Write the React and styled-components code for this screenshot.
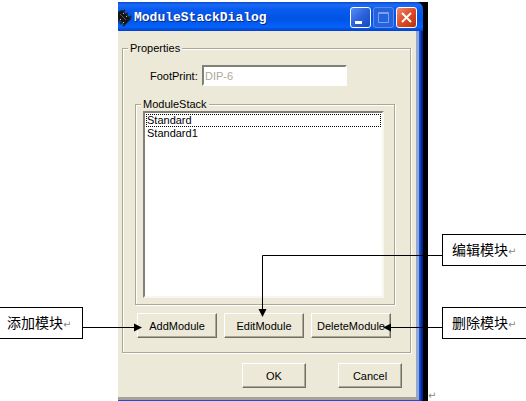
import React, { useState } from 'react';
import styled, { createGlobalStyle } from 'styled-components';

const GlobalStyle = createGlobalStyle`
    * {
        box-sizing: border-box;
    }
    body {
        margin: 0;
        background-color: white;
    }
`;

const Page = styled.main`
    display: grid;
    grid-template-columns: 118px minmax(0, 1fr) 98px;
    align-items: start;
    height: 100vh;
    padding-top: 2px;
    overflow: hidden;
    color: black;
    font-family: "Liberation Sans", "Noto Sans CJK SC", sans-serif;
    font-size: 11px;
    line-height: 14px;
`;

const LeftNotes = styled.div`
    padding: 305px 35px 0 0;
`;

const RightNotes = styled.div`
    display: flex;
    flex-direction: column;
    gap: 41px;
    padding-top: 232px;
`;

const Note = styled.div`
    position: relative;
    height: 32px;
    margin-left: ${(props) => (props.$side === 'right' ? '14px' : '0')};
    padding-left: ${(props) => (props.$side === 'right' ? '9px' : '7px')};
    border: 1px solid black;
    border-left-width: ${(props) => (props.$side === 'right' ? '1px' : '0')};
    border-right-width: ${(props) => (props.$side === 'right' ? '0' : '1px')};
    background-color: white;
    font-family: "Noto Sans CJK SC", sans-serif;
    font-size: 14px;
    line-height: 28px;
    white-space: nowrap;
`;

const ReturnMark = styled.span`
    color: #888;
    font-family: "DejaVu Sans", sans-serif;
    font-size: 10px;
    line-height: 10px;
`;

const LastMark = styled(ReturnMark)`
    margin-top: 11px;
`;

// the connectors lie over the dialog
const Connector = styled.svg`
    position: absolute;
    top: ${(props) => props.$top};
    left: ${(props) => (props.$side === 'right' ? 'auto' : '100%')};
    right: ${(props) => (props.$side === 'right' ? '100%' : 'auto')};
    z-index: 1;
    pointer-events: none;
`;

const Shadow = styled.div`
    padding-right: 5px;
    background-color: black;
`;

const Frame = styled.section`
    padding: 0 4px 4px 0;
    border-top-right-radius: 7px;
    background: linear-gradient(to right, #1d50d0 calc(100% - 3px), #0832b0 calc(100% - 2px), #001a80);
`;

const TitleBar = styled.header`
    display: flex;
    align-items: center;
    gap: 2px;
    height: 29px;
    margin-right: -4px;
    padding: 2px 6px 0 0;
    border-top-right-radius: 7px;
    background: linear-gradient(#0a4ad0, #1a6cf4 3px, #0a5cf0 7px, #0053e4 17px, #0562fb 25px, #0340c8);
`;

const Title = styled.h1`
    flex: 1;
    margin: 0;
    color: white;
    font-family: "Liberation Mono", monospace;
    font-size: 13px;
    font-weight: bold;
    line-height: 16px;
    text-shadow: 1px 1px #0a2a80;
`;

const TitleButton = styled.button`
    display: flex;
    width: 21px;
    height: 21px;
    padding: 0;
    border: 1px solid ${(props) => (props.disabled ? '#5d8cec' : 'white')};
    border-radius: 3px;
    background: ${(props) => {
        if (props.$close) return 'linear-gradient(135deg, #ee8a70, #df4a25 50%, #b83210)';
        if (props.disabled) return '#2563dc';
        return 'linear-gradient(135deg, #5a8cf0, #2a62dc 50%, #1848c0)';
    }};
`;

const Client = styled.form`
    padding: 10px 5px 9px 4px;
    border-right: 3px solid #8fa9d4;
    border-bottom: 3px solid #a5a29c;
    background-color: #ece9d8;
`;

const Group = styled.fieldset`
    min-width: 0;
    margin: 0;
    padding: ${(props) => props.$padding};
    border: 1px solid #aca899;
    box-shadow: inset 1px 1px #fff, 1px 1px #fff;
`;

const Legend = styled.legend`
    padding: 0 2px;
    margin-left: ${(props) => props.$indent || '0'};
    background-color: #ece9d8;
`;

const FieldRow = styled.div`
    display: flex;
    align-items: center;
    margin-bottom: 11px;
    padding: 0 48px 0 15px;
`;

const FieldLabel = styled.label`
    width: 52px;
`;

const Field = styled.input`
    flex: 1;
    min-width: 0;
    height: 21px;
    padding: 0 1px;
    border: 2px solid;
    border-color: #808076 #fff #fff #808076;
    background-color: white;
    color: #aca899;
    font: inherit;
`;

const List = styled.select`
    display: block;
    width: 100%;
    height: 187px;
    padding: 1px;
    border: 2px solid;
    border-color: #808076 #f8f6ee #f8f6ee #808076;
    border-radius: 0;
    outline: none;
    overflow: hidden;
    background-color: white;
    color: black;
    font: inherit;
`;

const Item = styled.option`
    min-height: 13px;
    height: 13px;
    padding: 0 1px;
    line-height: 13px;
    outline: ${(props) => (props.$focused ? '1px dotted black' : 'none')};
    outline-offset: -1px;
`;

const ModuleButtons = styled.div`
    display: flex;
    gap: 7px;
    margin-top: 8px;
    padding: 0 4px 0 2px;
`;

const Footer = styled.footer`
    display: flex;
    justify-content: flex-end;
    gap: 32px;
    margin-top: 10px;
    padding-right: 9px;
`;

const Button = styled.button`
    flex: ${(props) => (props.$width ? 'none' : '1 1 0')};
    width: ${(props) => props.$width || 'auto'};
    height: 25px;
    padding: 0;
    border: 1px solid;
    border-color: #fff #716f64 #716f64 #fff;
    box-shadow: inset -1px -1px #aca899;
    background-color: #ece9d8;
    color: black;
    font: inherit;
    white-space: nowrap;
`;

const ChipIcon = () => (
    <svg width="14" height="18" viewBox="0 0 14 18" aria-hidden="true">
        <path d="M0 3L4 1L13 10L7 16L0 10Z" fill="#161616" />
        <path d="M5 3l2-2M8 6l2-2M11 9l2-2M1 11l-1 2M4 13l-2 2M7 15l-2 2" stroke="#20242c" strokeWidth="2" />
        <path d="M2 5l6 6" stroke="#555" strokeWidth="1" />
        <path d="M5 4l1 1M8 7l1 1M2 10l1 1M5 13l1 1" stroke="#c8c0a8" strokeWidth="1" />
    </svg>
);

export default function App() {
    const [focused, setFocused] = useState('Standard');

    return (
        <>
            <GlobalStyle />
            <Page>
                <LeftNotes>
                    <Note>
                        添加模块<ReturnMark>↵</ReturnMark>
                        <Connector $top="15px" width="61" height="9">
                            <path d="M0 4.5H54" stroke="black" />
                            <path d="M52 0.5L60 4.5L52 8.5Z" />
                        </Connector>
                    </Note>
                </LeftNotes>
                <Shadow>
                    <Frame>
                        <TitleBar>
                            <ChipIcon />
                            <Title>ModuleStackDialog</Title>
                            <TitleButton type="button" aria-label="Minimize">
                                <svg width="19" height="19"><path d="M4 13h7v3h-7z" fill="white" /></svg>
                            </TitleButton>
                            <TitleButton type="button" aria-label="Maximize" disabled>
                                <svg width="19" height="19" fill="none" stroke="#7ba2f0">
                                    <path d="M4.5 4.5h10v10h-10zM4 5.5h11" />
                                </svg>
                            </TitleButton>
                            <TitleButton type="button" aria-label="Close" $close>
                                <svg width="19" height="19"><path d="M5 5l9 9M14 5l-9 9" stroke="white" strokeWidth="2" /></svg>
                            </TitleButton>
                        </TitleBar>
                        <Client onSubmit={(e) => e.preventDefault()}>
                            <Group $padding="10px 15px 14px 12px">
                                <Legend $indent="-7px">Properties</Legend>
                                <FieldRow>
                                    <FieldLabel htmlFor="footprint">FootPrint:</FieldLabel>
                                    <Field id="footprint" defaultValue="DIP-6" disabled />
                                </FieldRow>
                                <Group $padding="0 10px 6px 7px">
                                    <Legend $indent="-2px">ModuleStack</Legend>
                                    <List size={10} aria-label="ModuleStack" onChange={(e) => setFocused(e.target.value)}>
                                        {['Standard', 'Standard1'].map((name) => (
                                            <Item key={name} value={name} $focused={name === focused}>{name}</Item>
                                        ))}
                                    </List>
                                </Group>
                                <ModuleButtons>
                                    <Button type="button">AddModule</Button>
                                    <Button type="button">EditModule</Button>
                                    <Button type="button">DeleteModule</Button>
                                </ModuleButtons>
                            </Group>
                            <Footer>
                                <Button $width="64px" type="submit">OK</Button>
                                <Button $width="64px" type="button">Cancel</Button>
                            </Footer>
                        </Client>
                    </Frame>
                </Shadow>
                <RightNotes>
                    <Note $side="right">
                        编辑模块<ReturnMark>↵</ReturnMark>
                        <Connector $side="right" $top="20px" width="185" height="64">
                            <path d="M185 0.5H4.5V56" fill="none" stroke="black" />
                            <path d="M0.5 54H8.5L4.5 62Z" />
                        </Connector>
                    </Note>
                    <Note $side="right">
                        删除模块<ReturnMark>↵</ReturnMark>
                        <Connector $side="right" $top="15px" width="60" height="9">
                            <path d="M60 4.5H6" stroke="black" />
                            <path d="M8 0.5L0 4.5L8 8.5Z" />
                        </Connector>
                    </Note>
                    <LastMark>↵</LastMark>
                </RightNotes>
            </Page>
        </>
    );
}
